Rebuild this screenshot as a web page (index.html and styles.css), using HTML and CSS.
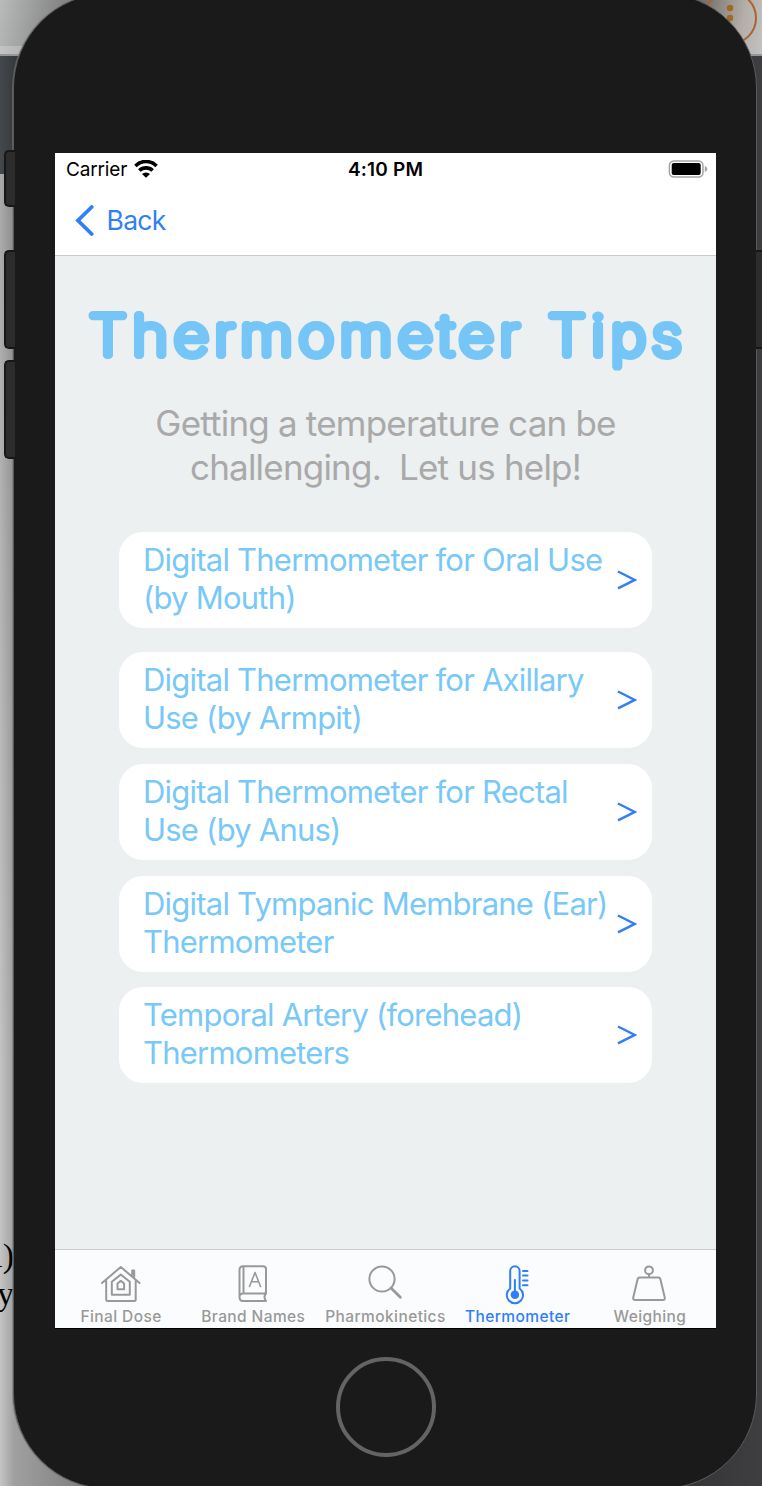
FILE: index.html
```html
<!DOCTYPE html>
<html lang="en">
<head>
<meta charset="utf-8">
<title>Thermometer Tips</title>
<link rel="stylesheet" href="styles.css">
</head>
<body>
<div class="stage">
  <div class="backdrop" aria-hidden="true">
    <div class="strip-top"></div>
    <div class="strip-dark"></div>
    <div class="strip-page"><span class="stray stray-a">l)</span><span class="stray stray-b">y</span></div>
    <div class="side-right"></div>
    <svg class="menu-ring" width="54" height="54" viewBox="0 0 54 54"><circle cx="27" cy="27" r="26" fill="none" stroke="#ad632b" stroke-width="2"/><circle cx="27" cy="17" r="3.200" fill="#9c6a26"/><circle cx="27" cy="27" r="3.200" fill="#9c6a26"/></svg>
  </div>
  <div class="phone">
    <main class="screen">
      <header class="top">
        <div class="status">
          <div class="carrier"><span>Carrier</span>
            <svg width="24" height="18" viewBox="0 0 25 18"><g fill="none" stroke="#000" stroke-width="3.800"><path d="M1.500 5.800a15.500 15.500 0 0 1 22 0"/><path d="M5.600 10.600a9.800 9.800 0 0 1 13.800 0"/></g><path d="M8.300 14.300a6 6 0 0 1 8.400 0L12.500 18z"/></svg>
          </div>
          <div class="time">4:10 PM</div>
          <svg class="battery" width="40" height="18" viewBox="0 0 40 18"><rect x="1.400" y=".9" width="33.600" height="16.200" rx="4.500" fill="none" stroke="#a5a5a5" stroke-width="1.500"/><rect x="3.700" y="3" width="29" height="12" rx="2" fill="#000"/><path d="M36.800 6c3.300.7 3.300 5.300 0 6z" fill="#a5a5a5"/></svg>
        </div>
        <a class="back"><svg width="19" height="31" viewBox="0 0 19 31"><path d="M16.700 2 3 15.500l13.700 13.500" fill="none" stroke="#307ff6" stroke-width="3.800" stroke-linecap="round" stroke-linejoin="miter"/></svg><span>Back</span></a>
      </header>
      <section class="content">
        <h1 class="title"><svg width="661" height="90" viewBox="0 0 661 90"><g transform="scale(1.100 1)"><text x="31.200" y="59.200" textLength="538.500">Thermometer Tips</text></g><circle cx="543" cy="21.800" r="4.200"/></svg></h1>
        <p class="lead"><span class="lead-a">Getting a temperature can be</span><br><span class="lead-b">challenging.&nbsp; Let us help!</span></p>
        <div class="cards">
          <a class="card first"><span>Digital Thermometer for Oral Use<br>(by Mouth)</span><svg width="20" height="20" viewBox="0 0 20 20"><path d="M1 1.500 17.800 9.900 1 18.400"/></svg></a>
          <a class="card"><span>Digital Thermometer for Axillary<br>Use (by Armpit)</span><svg width="20" height="20" viewBox="0 0 20 20"><path d="M1 1.500 17.800 9.900 1 18.400"/></svg></a>
          <a class="card"><span>Digital Thermometer for Rectal<br>Use (by Anus)</span><svg width="20" height="20" viewBox="0 0 20 20"><path d="M1 1.500 17.800 9.900 1 18.400"/></svg></a>
          <a class="card"><span>Digital Tympanic Membrane (Ear)<br>Thermometer</span><svg width="20" height="20" viewBox="0 0 20 20"><path d="M1 1.500 17.800 9.900 1 18.400"/></svg></a>
          <a class="card"><span>Temporal Artery (forehead)<br>Thermometers</span><svg width="20" height="20" viewBox="0 0 20 20"><path d="M1 1.500 17.800 9.900 1 18.400"/></svg></a>
        </div>
      </section>
      <nav class="tabs">
        <a class="tab"><svg width="42" height="42" viewBox="0 0 42 42"><path d="M2 20 20.800 4 39.500 20M6.200 18v18.500q0 1.500 1.500 1.500h26.500q1.500 0 1.500-1.500V18M34.200 14V7.500h-2V12"/><path d="M11.800 31.800V18.800l9-7.200 9 7.200v13zM17.500 26.300v-5.800l3.300-2.800 3.300 2.800v5.800z"/></svg><span>Final Dose</span></a>
        <a class="tab"><svg width="42" height="42" viewBox="0 0 42 42"><path d="M34 38H11q-3.500 0-3.500-4V7q0-3.800 3.500-3.800h20q3 0 3 3V28.500q0 2-2 2H11q-3.500 0-3.500 3.500M11.500 3.500v27M34 30.500q-3 3.500 0 7.500"/><path d="m17.500 23.500 5.500-14 5.500 14M19.500 18.800h7" stroke-width="1.600"/></svg><span>Brand Names</span></a>
        <a class="tab"><svg width="42" height="42" viewBox="0 0 42 42"><circle cx="18" cy="16" r="12.600"/><path d="m27 25 9.300 9.200" stroke-width="2.800"/></svg><span>Pharmokinetics</span></a>
        <a class="tab active"><svg width="42" height="42" viewBox="0 0 42 42"><path d="M14.200 25.500V8a4.700 4.700 0 0 1 9.400 0v17.500a8.100 8.100 0 1 1-9.400 0z"/><circle cx="18.900" cy="31.800" r="4.300" fill="currentColor" stroke="none"/><path d="M18.900 17v14M27 8h4.500M27 12.600h4.500M27 17.400h4.500M27 22.200h4.500"/></svg><span>Thermometer</span></a>
        <a class="tab"><svg width="42" height="42" viewBox="0 0 42 42"><circle cx="21" cy="7.300" r="3.900"/><path d="M21 11.500v3M11.600 14.500h18.800q1.600 0 2 1.700l4.300 18q.7 2.800-2 2.800H7.300q-2.700 0-2-2.800l4.300-18q.4-1.700 2-1.700z"/></svg><span>Weighing</span></a>
      </nav>
    </main>
    <div class="home"></div>
  </div>
  <i class="key key-mute"></i><i class="key key-up"></i><i class="key key-down"></i><i class="key key-power"></i>
</div>
</body>
</html>
```
FILE: styles.css
```css
body { margin: 0; font-family: Inter, "Liberation Sans", sans-serif; }
.stage { position: relative; width: 762px; height: 1486px; overflow: hidden; background: #39393b; }

/* windows behind the device */
.backdrop { position: absolute; inset: 0; }
.strip-top { box-sizing: border-box; height: 56px; border-bottom: 2px solid #95959a; background: linear-gradient(#0000 46px, #ffffff38 46px 54px, #0000 54px) 0 0 / 100px 100% no-repeat, linear-gradient(100deg, #b9bbbb 0, #8a8b8a 55px, #6e6b66 110px, #706b65 690px, #b3aea7 735px, #c4c4c6 762px); }
.strip-dark { height: 118px; background: linear-gradient(90deg, #44484c, #36393c 16px, #36393c); }
.strip-page { position: relative; width: 100px; height: 1312px; background: linear-gradient(90deg, #c4c4c4, #a0a0a0 14px, #8c8c8c 55px, #777 100px); }
.strip-page::before { content: ""; position: absolute; inset: 0; background: linear-gradient(#0002, #0000 900px); }
.side-right { position: absolute; right: 0; top: 56px; width: 110px; bottom: 0; background: linear-gradient(90deg, #323234, #3e3e40); }
.menu-ring { position: absolute; left: 703px; top: -9px; }
.stray { position: absolute; right: 86px; font: 34px/38px "Liberation Serif", serif; color: #000; }
.stray-a { top: 1063px; }
.stray-b { top: 1101px; }

/* hardware keys on the device edge */
.key { box-sizing: border-box; position: absolute; left: 4px; width: 11px; background: #2c2c2c; border: 2px solid #171717; border-right: 0; border-radius: 5px 0 0 5px; }
.key-mute { top: 150px; height: 57px; }
.key-up { top: 250px; height: 99px; }
.key-down { top: 360px; height: 99px; }
.key-power { left: 756px; top: 250px; height: 99px; border-radius: 0; border-left: 0; }

.phone { box-sizing: border-box; position: relative; width: 744px; height: 1496px; margin: 0 0 0 13px; top: -7px; padding: 159px 40px 0 41px; border: 1px solid #5a5a5a; border-radius: 95px; background: #1a1a1a; box-shadow: -1px 0 0 #77777799; }
.screen { display: flex; flex-direction: column; width: 661px; height: 1175px; background: #ecf0f1; box-shadow: 0 1px 0 #000; }
.top { box-sizing: border-box; height: 103px; background: #fff; border-bottom: 1px solid #c9cbcb; }
.status { display: grid; grid-template-columns: 1fr auto 1fr; align-items: center; height: 33px; padding: 0 8px 0 11px; }
.carrier { display: flex; gap: 7px; align-items: center; font-size: 19px; letter-spacing: -.15px; }
.carrier svg { margin-top: -1px; }
.time { margin-left: -3px; font-size: 19px; font-weight: 600; letter-spacing: .2px; }
.battery { justify-self: end; margin-top: -1px; }
.back { display: flex; align-items: center; gap: 13px; height: 68px; padding-left: 19.500px; color: #307ff6; font-size: 26.500px; letter-spacing: -.7px; }

.content { flex: 1; }
.title { margin: 40px 0 0; height: 106px; }
.title svg { display: block; fill: #75c6f6; }
.title text { font: 100 55px Inter, sans-serif; stroke: #75c6f6; stroke-width: 8px; stroke-linejoin: round; }
.lead { margin: -1px 0 0; text-align: center; font-size: 35px; line-height: 44px; letter-spacing: -.8px; color: #a9a9a9; }
.cards { display: flex; flex-direction: column; gap: 15.700px; margin: 43.200px 64px 0; }
.card { box-sizing: border-box; display: flex; justify-content: space-between; align-items: center; height: 96px; padding: 0 15.500px 0 24px; border-radius: 24px; background: #fff; color: #78c8f8; font-size: 31px; line-height: 38px; letter-spacing: -.78px; white-space: nowrap; }
.card.first { margin-bottom: 8.300px; }
.card span { padding-bottom: 1.500px; }
.card svg { flex: none; }
.card path { fill: none; stroke: #307ff6; stroke-width: 2.400; }

.tabs { box-sizing: border-box; display: grid; grid-template-columns: repeat(5, 1fr); height: 79px; border-top: 1px solid #c8cbcc; background: #fbfcfd; }
.tab { display: flex; flex-direction: column; align-items: center; padding-top: 13px; color: #999; font-size: 15.500px; font-weight: 500; line-height: 24px; letter-spacing: .4px; white-space: nowrap; }
.tab svg { margin-left: -1px; fill: none; stroke: currentColor; stroke-width: 2; stroke-linecap: round; stroke-linejoin: round; }
.tab.active { color: #307ff6; }
.home { box-sizing: border-box; width: 100px; height: 100px; margin: 29px 0 0 280.500px; border: 4px solid #646464; border-radius: 50%; }
```
